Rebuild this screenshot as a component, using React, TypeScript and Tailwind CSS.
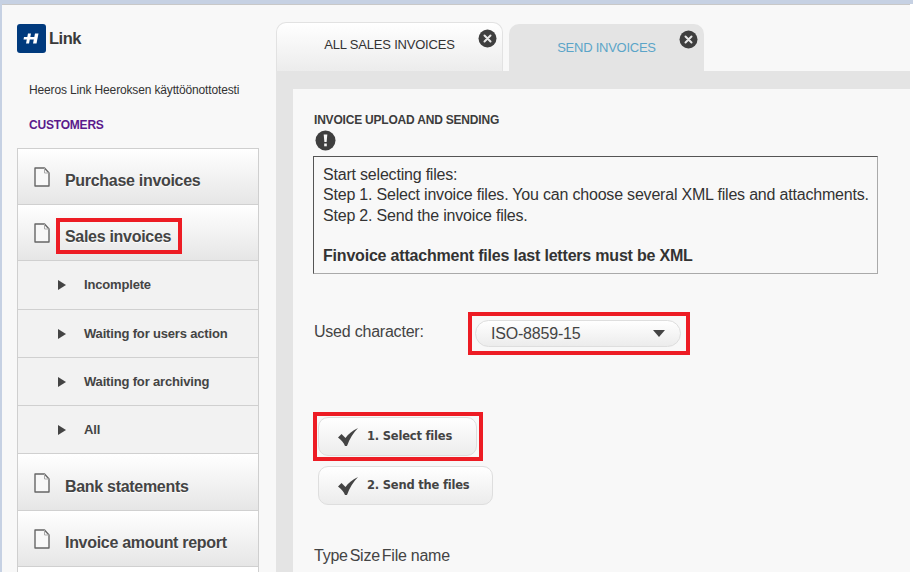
const sans = "font-['Liberation_Sans',Arial,sans-serif]";

function DocIcon() {
  return (
    <svg width="16" height="20" viewBox="0 0 16 20" className="shrink-0">
      <path d="M1 1H10.5L15 6V19H1Z" fill="#f8f8f8" stroke="#666" strokeWidth="1.4" strokeLinejoin="round" />
      <path d="M10.5 1V6H15" fill="none" stroke="#aaa" strokeWidth="1" />
    </svg>
  );
}

function Check() {
  return (
    <svg width="20" height="18" viewBox="0 0 20 18" className="shrink-0">
      <path d="M0 9.5L3.5 6L7.5 10C10 6.5 14 2.5 20 0C15.5 4.5 11.5 11 9 18H7C5.5 14.5 3.5 12 0 9.5Z" fill="#444" />
    </svg>
  );
}

function CloseDot() {
  return (
    <svg width="19" height="19" viewBox="0 0 19 19" className="absolute">
      <circle cx="9.5" cy="9.5" r="9" fill="#3f3f3f" />
      <path d="M6.5 6.5L12.5 12.5M12.5 6.5L6.5 12.5" stroke="#e8e8e8" strokeWidth="2" strokeLinecap="round" />
    </svg>
  );
}

function MainItem({ label, boxed, tall }: { label: string; boxed?: boolean; tall?: boolean }) {
  return (
    <div className={`${tall ? "h-[57px] pt-[19px]" : "h-[56px] pt-[18px]"} flex items-start pl-[16px] bg-gradient-to-b from-white to-[#e6e6e6] border-b border-[#d0d0d0]`}>
      <DocIcon />
      {boxed ? (
        <span className="ml-[6px] -mt-[5px] border-[4px] border-[#ed1c24] w-[126px] h-[36px] pl-[5px] pt-[1px] flex items-center text-[16px] font-bold tracking-[-0.3px] text-[#444] whitespace-nowrap [text-shadow:0_1px_1px_#fff]">
          {label}
        </span>
      ) : (
        <span className="ml-[15px] mt-[4px] text-[16px] leading-[20px] font-bold tracking-[-0.3px] text-[#444] whitespace-nowrap [text-shadow:0_1px_1px_#fff]">
          {label}
        </span>
      )}
    </div>
  );
}

function SubItem({ label, first }: { label: string; first?: boolean }) {
  return (
    <div className={`${first ? "h-[49px]" : "h-[48px]"} flex items-center pl-[40px] bg-[#f2f2f2] border-b border-[#d0d0d0]`}>
      <span className="w-0 h-0 border-y-[5.5px] border-y-transparent border-l-[8px] border-l-[#444]" />
      <span className="ml-[18px] text-[13px] font-bold tracking-[-0.17px] text-[#444] whitespace-nowrap">{label}</span>
    </div>
  );
}

function ActionButton({ label, width }: { label: string; width: string }) {
  return (
    <div className={`${width} h-[39px] flex items-center pl-[19px] rounded-[10px] border border-[#dedede] bg-gradient-to-b from-white to-[#ececec]`}>
      <Check />
      <span className="ml-[9px] pt-[1px] text-[11.5px] font-bold font-['DejaVu_Sans',sans-serif] tracking-[-0.2px] text-[#444] whitespace-nowrap">{label}</span>
    </div>
  );
}

export default function App() {
  return (
    <div className={`${sans} w-[913px] h-[572px] overflow-hidden bg-white flex flex-col`}>
      <div className="h-[4px] shrink-0 bg-[#c6d1e3]" />
      <div className="flex-1 min-h-0 flex">
        <div className="w-[2px] shrink-0 bg-[#c6d1e3]" />
        <div className="w-[908px] shrink-0 bg-[#f8f8f8] border-t border-[#c8c8c8] flex">
          <aside className="w-[274px] shrink-0 pl-[15px]">
            <div className="flex items-center gap-[3px] mt-[19px] h-[29px]">
              <svg width="29" height="29" viewBox="0 0 29 29">
                <rect width="29" height="29" rx="3" fill="#003a7d" />
                <path d="M11 9.5H14L12 19.5H9Z" fill="#fff" />
                <path d="M18 9.5H21.5L19.5 19.5H16Z" fill="#fff" />
                <path d="M7 13H20V15.5H6.5Z" fill="#fff" />
              </svg>
              <span className="text-[16.5px] font-bold text-[#3a3a3a] tracking-[-0.5px]">Link</span>
            </div>
            <div className="ml-[12px] mt-[30px] text-[12px] leading-[14px] text-[#333] whitespace-nowrap tracking-[-0.15px]">Heeros Link Heeroksen käyttöönottotesti</div>
            <div className="ml-[12px] mt-[21px] text-[12px] leading-[14px] font-bold tracking-[-0.2px] text-[#5a1a8c]">CUSTOMERS</div>
            <nav className="mt-[16px] w-[242px] border-x border-t border-[#cfcfcf]">
              <MainItem label="Purchase invoices" />
              <MainItem label="Sales invoices" boxed />
              <SubItem label="Incomplete" first />
              <SubItem label="Waiting for users action" />
              <SubItem label="Waiting for archiving" />
              <SubItem label="All" />
              <MainItem label="Bank statements" tall />
              <MainItem label="Invoice amount report" />
              <div className="h-[20px] bg-white" />
            </nav>
          </aside>
          <main className="flex-1 min-w-0 flex flex-col">
            <div className="h-[66px] shrink-0 flex items-end">
              <div className="relative w-[227px] h-[49px] rounded-t-[10px] border border-b-0 border-[#e2e2e2] bg-gradient-to-b from-white to-[#ececec] flex items-center justify-center pb-[4px] text-[13px] tracking-[-0.2px] text-[#333]">
                ALL SALES INVOICES
                <span className="absolute right-[5px] top-[6px] w-[19px] h-[19px]"><CloseDot /></span>
              </div>
              <div className="relative ml-[6px] w-[195px] h-[47px] rounded-t-[10px] bg-[#e4e4e4] flex items-center justify-center text-[13px] tracking-[-0.25px] text-[#5ba4c8]">
                SEND INVOICES
                <span className="absolute right-[6px] top-[6px] w-[19px] h-[19px]"><CloseDot /></span>
              </div>
            </div>
            <div className="flex-1 min-h-0 bg-[#e4e4e4] pt-[18px] pl-[17px]">
              <div className="h-full bg-[#f8f8f8] pl-[20px] pr-[32px] pt-[24px]">
                <h2 className="ml-[1px] text-[12px] leading-[14px] font-bold tracking-[-0.2px] text-[#3c3c3c]">INVOICE UPLOAD AND SENDING</h2>
                <svg width="21" height="21" viewBox="0 0 21 21" className="mt-[3px] ml-[2px]">
                  <circle cx="10.5" cy="10.5" r="10" fill="#3f3f3f" />
                  <path d="M8.7 4.5H12.3L11.6 12H9.4Z" fill="#f8f8f8" />
                  <rect x="9.2" y="13.5" width="2.6" height="2.8" fill="#f8f8f8" />
                </svg>
                <div className="mt-[5px] w-[565px] h-[118px] border border-[#555] border-r-[#aaa] border-b-[#aaa] pl-[9px] pt-[8px] text-[16px] leading-[20.25px] tracking-[-0.2px] text-[#333] whitespace-nowrap">
                  <div>Start selecting files:</div>
                  <div>Step 1. Select invoice files. You can choose several XML files and attachments.</div>
                  <div>Step 2. Send the invoice files.</div>
                  <div className="mt-[20.25px] font-bold">Finvoice attachment files last letters must be XML</div>
                </div>
                <div className="mt-[38px] flex items-start">
                  <span className="ml-[1px] w-[110px] mt-[10px] text-[16px] leading-[20px] tracking-[-0.22px] text-[#444] whitespace-nowrap">Used character:</span>
                  <div className="ml-[44px] w-[222px] h-[43px] border-[4px] border-[#ed1c24] pl-[3px] pr-[5px] py-[4px]">
                    <div className="h-full rounded-full border border-[#dedede] bg-gradient-to-b from-white to-[#ececec] flex items-center justify-between pl-[15px] pr-[15px] text-[16px] tracking-[-0.2px] text-[#444]">
                      ISO-8859-15
                      <span className="w-0 h-0 border-x-[6px] border-x-transparent border-t-[7px] border-t-[#444]" />
                    </div>
                  </div>
                </div>
                <div className="mt-[57px] w-[170px] h-[49px] border-[4px] border-[#ed1c24] flex items-center pl-[1px]">
                  <ActionButton label="1. Select files" width="w-[159px]" />
                </div>
                <div className="mt-[5px] ml-[5px]">
                  <ActionButton label="2. Send the files" width="w-[175px]" />
                </div>
                <div className="mt-[41px] ml-[1px] flex gap-[2px] text-[16px] leading-[20px] tracking-[-0.25px] text-[#444]">
                  <span>Type</span><span>Size</span><span>File name</span>
                </div>
              </div>
            </div>
          </main>
        </div>
      </div>
    </div>
  );
}
